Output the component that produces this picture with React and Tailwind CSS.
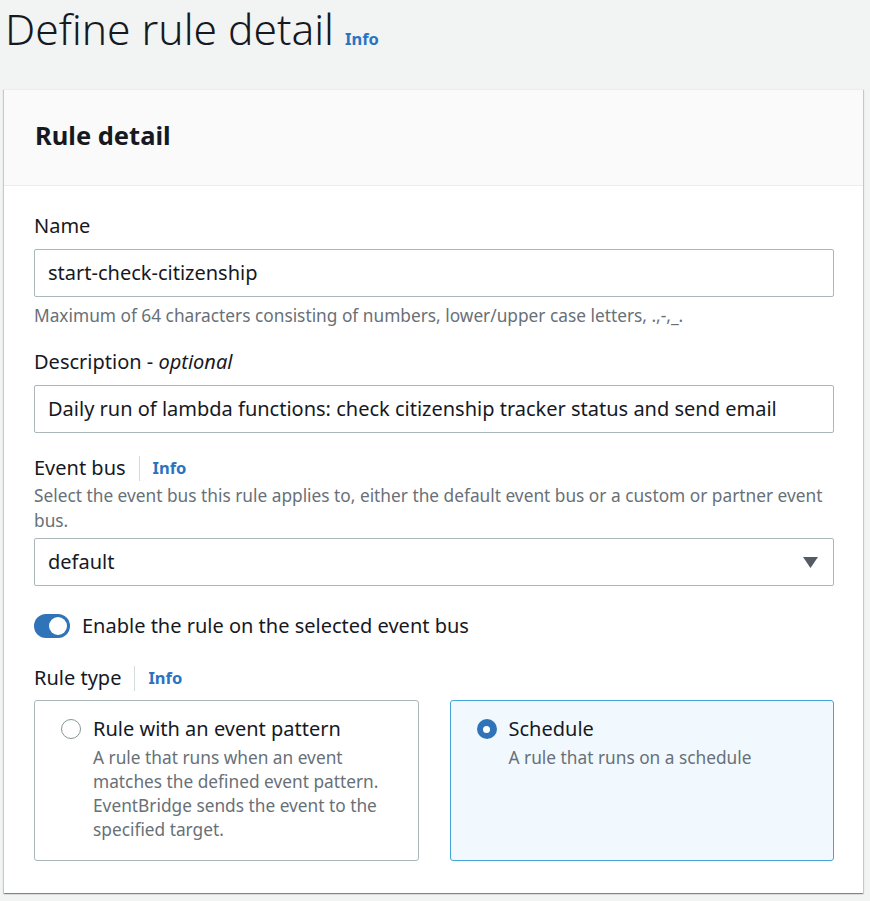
import React from "react";

const font = { fontFamily: "'Noto Sans', 'Open Sans', sans-serif" };

const InfoLink = ({ className = "" }) => (
  <span className={"text-[16.5px] font-bold text-[#2a73c0] " + className}>Info</span>
);

const LabelWithInfo = ({ label }) => (
  <div className="flex h-6 items-center text-[20px] leading-6 text-[#16191f]">
    <span>{label}</span>
    <span className="mx-[13px] h-[25px] w-px bg-[#d5dbdb]"></span>
    <InfoLink />
  </div>
);

const TextInput = ({ value }) => (
  <div className="flex h-[48px] items-center rounded-[2px] border border-[#aab7b8] bg-white px-[13px] text-[20px] text-[#16191f]">
    {value}
  </div>
);

const Radio = ({ checked }) =>
  checked ? (
    <span className="flex h-5 w-5 shrink-0 items-center justify-center rounded-full bg-[#2f73b9]">
      <span className="h-[7px] w-[7px] rounded-full bg-white"></span>
    </span>
  ) : (
    <span className="h-5 w-5 shrink-0 rounded-full border-[1.5px] border-[#879596] bg-white"></span>
  );

const Tile = ({ title, desc, checked }) => (
  <div
    className={
      "h-[161px] rounded-[3px] border pl-[26px] pr-4 pt-4 " +
      (checked ? "border-[#44a6d8] bg-[#f1f9fe]" : "border-[#aab7b8] bg-white")
    }
  >
    <div className="flex h-6 items-center gap-[12px]">
      <Radio checked={checked} />
      <span className="text-[20px] text-[#16191f]">{title}</span>
    </div>
    <div className="mt-[5px] pl-[32px] text-[17.3px] leading-6 text-[#687078]">{desc}</div>
  </div>
);

export default function App() {
  return (
    <div className="min-h-[901px] bg-[#f2f3f3] pl-[4px] pr-[7px]" style={font}>
      {/* 제목 */}
      <div className="flex h-[89px] items-baseline gap-[13px] pt-[5px]">
        <h1 className="ml-[1px] text-[42.5px] font-light leading-[48px] text-[#16191f]">Define rule detail</h1>
        <InfoLink className="-ml-[2px]" />
      </div>

      {/* 카드 */}
      <div className="bg-white shadow-[0_1px_1px_0_rgba(0,28,36,0.3),1px_1px_1px_0_rgba(0,28,36,0.15),-1px_1px_1px_0_rgba(0,28,36,0.15)]">
        <div className="flex h-[97px] items-center border-b border-t border-[#eaeded] bg-[#fafafa] px-[31px] pb-1">
          <h2 className="text-[25.5px] font-bold text-[#16191f]">Rule detail</h2>
        </div>

        <div className="pb-[32px] pl-[30px] pr-[29px] pt-[28px]">
          <div className="text-[20px] leading-6 text-[#16191f]">Name</div>
          <div className="mt-[11px]">
            <TextInput value="start-check-citizenship" />
          </div>
          <div className="mt-[7px] text-[17.3px] leading-6 text-[#687078]">
            Maximum of 64 characters consisting of numbers, lower/upper case letters, .,-,_.
          </div>

          <div className="mt-[22px] text-[20px] leading-6 text-[#16191f]">
            Description - <i>optional</i>
          </div>
          <div className="mt-[11px]">
            <TextInput value="Daily run of lambda functions: check citizenship tracker status and send email" />
          </div>

          <div className="mt-[23px]">
            <LabelWithInfo label="Event bus" />
          </div>
          <div className="mt-[3px] text-[17.3px] leading-[25px] text-[#687078]">
            Select the event bus this rule applies to, either the default event bus or a custom or partner event bus.
          </div>
          <div className="mt-[5px] flex h-[48px] items-center justify-between rounded-[2px] border border-[#aab7b8] bg-white pl-[13px] pr-[15px] text-[20px] text-[#16191f]">
            <span>default</span>
            <svg width="15" height="11" viewBox="0 0 15 11">
              <path d="M0 0 H15 L7.5 11 Z" fill="#545b64" />
            </svg>
          </div>

          {/* 토글 */}
          <div className="mt-[28px] flex h-6 items-center gap-[12px]">
            <span className="flex h-6 w-9 items-center justify-end rounded-full bg-[#2f73b9] px-[3px]">
              <span className="h-[18px] w-[18px] rounded-full bg-white"></span>
            </span>
            <span className="text-[20px] text-[#16191f]">Enable the rule on the selected event bus</span>
          </div>

          <div className="mt-[28px]">
            <LabelWithInfo label="Rule type" />
          </div>
          <div className="mt-[10px] grid grid-cols-2 gap-[31px]">
            <Tile
              title="Rule with an event pattern"
              desc="A rule that runs when an event matches the defined event pattern. EventBridge sends the event to the specified target."
            />
            <Tile title="Schedule" desc="A rule that runs on a schedule" checked />
          </div>
        </div>
      </div>
    </div>
  );
}
